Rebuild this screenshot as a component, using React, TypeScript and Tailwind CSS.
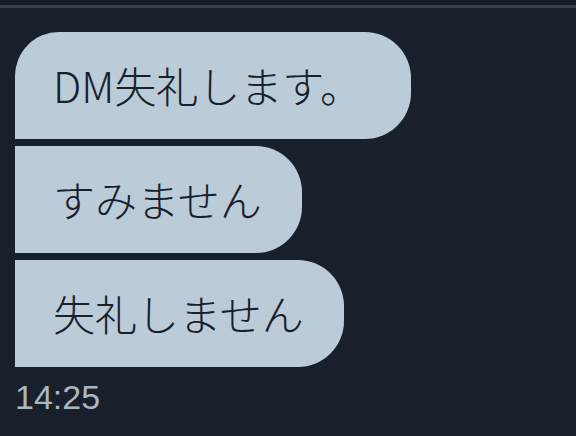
const messages = [
  { text: "DM失礼します。", first: true },
  { text: "すみません", first: false },
  { text: "失礼しません", first: false },
];

export default function App() {
  return (
    <div className="w-[576px] h-[436px] overflow-hidden bg-[#17202b] flex flex-col">
      <div className="h-[5px] bg-[#161d27]" />
      <div className="h-[3px] bg-[#39414d]" />
      <div className="flex flex-col items-start gap-[7px] pl-[15px] pt-[24px]">
        {messages.map((m) => (
          <div
            key={m.text}
            className={
              m.first
                ? "h-[107px] flex items-center pl-[38px] pr-[49px] bg-[#bccbd8] rounded-tl-[44px] rounded-r-[46px]"
                : "h-[107px] flex items-center pl-[38px] pr-[40px] bg-[#bccbd8] rounded-r-[46px]"
            }
          >
            <span className="text-[42px] leading-none font-light text-[#17202b] font-['Noto_Sans_CJK_JP',sans-serif] -mt-[2px]">
              {m.text}
            </span>
          </div>
        ))}
      </div>
      <div className="pl-[15px] pt-[13px] text-[34px] leading-none text-[#a9b7c3] font-['Liberation_Sans',sans-serif]">
        14:25
      </div>
    </div>
  );
}
